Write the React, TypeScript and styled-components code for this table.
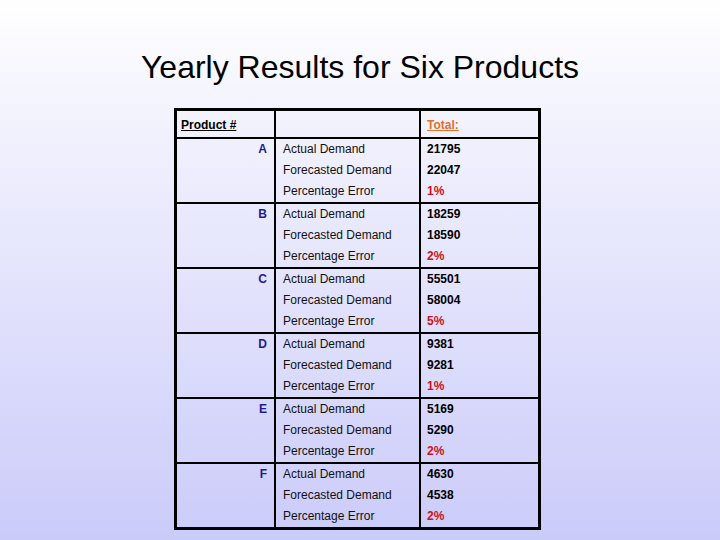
import React, { ReactElement } from 'react';
import styled, { createGlobalStyle } from 'styled-components';

const GlobalStyle = createGlobalStyle`
  html, body {
    margin: 0;
    padding: 0;
  }
  body {
    font-family: "Liberation Sans", Arial, sans-serif;
  }
`;

const Slide = styled.div`
  width: 720px;
  height: 540px;
  overflow: hidden;
  background: linear-gradient(to bottom, #ffffff 0%, #f6f6fe 15%, #cbcbfa 100%);
  color: #000;
`;

const Title = styled.h1`
  margin: 0;
  padding-top: 49px;
  font-size: 32px;
  line-height: 37px;
  font-weight: normal;
  text-align: center;
  color: #000;
`;

const Table = styled.div`
  box-sizing: border-box;
  width: 367px;
  margin: 22px 0 0 174px;
  border: 3px solid #000;
`;

const Row = styled.div<{ $head?: boolean }>`
  display: grid;
  grid-template-columns: 99px 145px 1fr;
  border-bottom: 2px solid #000;
  height: ${(p) => (p.$head ? '26px' : '63px')};

  &:last-child {
    border-bottom: none;
  }
`;

const Cell = styled.div<{ $divider?: boolean; $right?: boolean; $pad?: string }>`
  box-sizing: border-box;
  border-right: ${(p) => (p.$divider ? '2px solid #000' : 'none')};
  text-align: ${(p) => (p.$right ? 'right' : 'left')};
  padding: ${(p) => p.$pad || '0'};
  font-size: 12px;
`;

const HeadText = styled.span<{ $color: string }>`
  display: inline-block;
  margin-top: 7px;
  line-height: 14px;
  font-weight: bold;
  text-decoration: underline;
  color: ${(p) => p.$color};
`;

const Letter = styled.div`
  line-height: 21px;
  font-weight: bold;
  color: #1c1c96;
`;

const Line = styled.div<{ $color?: string; $bold?: boolean }>`
  line-height: 21px;
  white-space: nowrap;
  color: ${(p) => p.$color || '#111'};
  font-weight: ${(p) => (p.$bold ? 'bold' : 'normal')};
`;

interface Product {
  id: string;
  actual: number;
  forecast: number;
  error: string;
}

const products: Product[] = [
  { id: 'A', actual: 21795, forecast: 22047, error: '1%' },
  { id: 'B', actual: 18259, forecast: 18590, error: '2%' },
  { id: 'C', actual: 55501, forecast: 58004, error: '5%' },
  { id: 'D', actual: 9381, forecast: 9281, error: '1%' },
  { id: 'E', actual: 5169, forecast: 5290, error: '2%' },
  { id: 'F', actual: 4630, forecast: 4538, error: '2%' },
];

function App(): ReactElement {
  return (
    <>
      <GlobalStyle />
      <Slide>
        <Title>Yearly Results for Six Products</Title>
        <Table>
          <Row $head>
            <Cell $divider $pad="0 0 0 4px">
              <HeadText $color="#000">Product #</HeadText>
            </Cell>
            <Cell $divider />
            <Cell $pad="0 0 0 6px">
              <HeadText $color="#e2702a">Total:</HeadText>
            </Cell>
          </Row>
          {products.map((p) => (
            <Row key={p.id}>
              <Cell $divider $right $pad="0 7px 0 0">
                <Letter>{p.id}</Letter>
              </Cell>
              <Cell $divider $pad="0 0 0 7px">
                <Line>Actual Demand</Line>
                <Line>Forecasted Demand</Line>
                <Line>Percentage Error</Line>
              </Cell>
              <Cell $pad="0 0 0 6px">
                <Line $bold $color="#000">{p.actual}</Line>
                <Line $bold $color="#000">{p.forecast}</Line>
                <Line $bold $color="#d01020">{p.error}</Line>
              </Cell>
            </Row>
          ))}
        </Table>
      </Slide>
    </>
  );
}

export default App;
